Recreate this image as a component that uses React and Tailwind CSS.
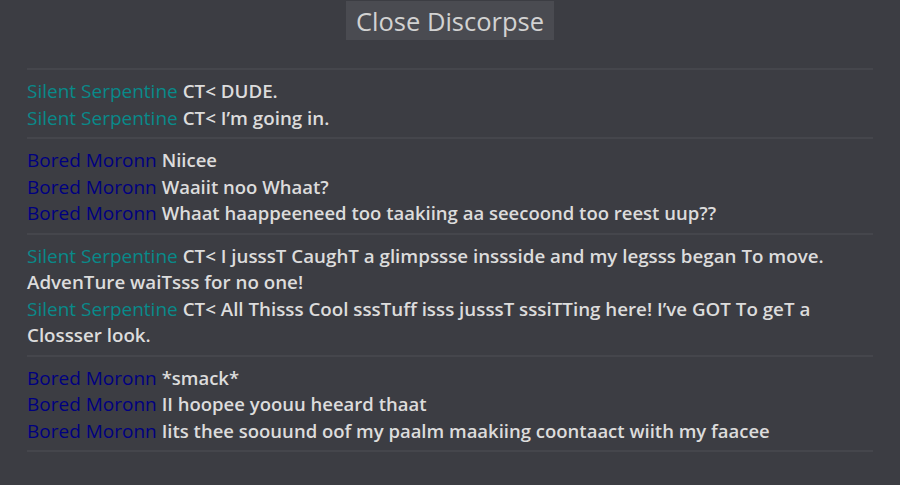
import React from "react";

const SERPENT = "Silent Serpentine";
const MORON = "Bored Moronn";

const groups = [
  [
    [SERPENT, "CT< DUDE."],
    [SERPENT, "CT< I’m going in."],
  ],
  [
    [MORON, "Niicee"],
    [MORON, "Waaiit noo Whaat?"],
    [MORON, "Whaat haappeeneed too taakiing aa seecoond too reest uup??"],
  ],
  [
    [
      SERPENT,
      "CT< I jusssT CaughT a glimpssse inssside and my legsss began To move. AdvenTure waiTsss for no one!",
    ],
    [
      SERPENT,
      "CT< All Thisss Cool sssTuff isss jusssT sssiTTing here! I’ve GOT To geT a Clossser look.",
    ],
  ],
  [
    [MORON, "*smack*"],
    [MORON, "II hoopee yoouu heeard thaat"],
    [MORON, "Iits thee soouund oof my paalm maakiing coontaact wiith my faacee"],
  ],
];

const Line = ({ who, text }) => {
  const serpent = who === SERPENT;
  return (
    <div className="leading-[26.5px]">
      <span
        className={`font-normal text-[19px] ${
          serpent ? "text-[#088a8a]" : "text-[#000080]"
        }`}
      >
        {who}
      </span>{" "}
      <span
        className={`font-semibold text-[#dcdcdc] ${
          serpent ? "text-[18.75px]" : "text-[18.5px]"
        }`}
      >
        {text}
      </span>
    </div>
  );
};

export default function App() {
  return (
    <div
      className="w-[900px] h-[485px] bg-[#3c3d43] overflow-hidden"
      style={{ fontFamily: '"Open Sans", sans-serif' }}
    >
      <div className="flex justify-center pt-px">
        <button className="h-[39px] px-[10px] bg-[#4a4b51] text-[25.5px] leading-[38px] text-[#d2d2d2]">
          Close Discorpse
        </button>
      </div>

      <div className="mx-[27px] mt-[28px] border-b-2 border-[#45464c]">
        {groups.map((g, i) => (
          <div
            key={i}
            className="border-t-2 border-[#45464c] pt-[8px] pb-[6px] text-[19px]"
          >
            {g.map(([who, text], j) => (
              <Line key={j} who={who} text={text} />
            ))}
          </div>
        ))}
      </div>
    </div>
  );
}
